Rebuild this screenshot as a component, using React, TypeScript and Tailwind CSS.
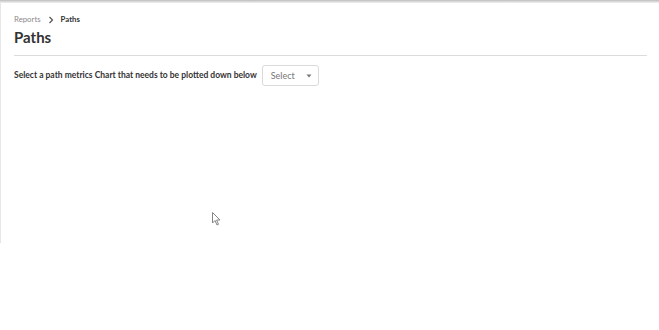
import React from "react";

export default function App() {
  return (
    <div className="w-[659px] h-[330px] bg-white relative overflow-hidden" style={{ fontFamily: 'Lato, "Open Sans", sans-serif' }}>
      <div className="h-[3px] bg-gradient-to-b from-[#bdbdbd] to-[#f3f3f3]" />
      <div className="flex">
        <div className="w-px h-[240px] bg-[#e6e6e6]" />
        <div className="flex-1 pl-[13px] pr-[12px]">
          <div className="flex items-center gap-[5px] mt-[12px] h-[10px] text-[7.8px]">
            <span className="text-[#8a8a8a]">Reports</span>
            <svg width="8" height="8" viewBox="0 0 8 8" className="mx-[1px]">
              <path d="M2.5 1 L5.5 4 L2.5 7" stroke="#555" strokeWidth="1.2" fill="none" />
            </svg>
            <span className="text-[#333] font-bold">Paths</span>
          </div>
          <div className="mt-[2px] text-[15px] font-bold text-[#333] leading-[20px]">Paths</div>
          <div className="mt-[8px] h-px bg-[#dcdcdc]" />
          <div className="flex items-center mt-[9px] gap-[5px]">
            <span className="text-[8.5px] font-bold text-[#333]">Select a path metrics Chart that needs to be plotted down below</span>
            <div className="w-[57px] h-[21px] border border-[#dadada] rounded-[3px] flex items-center justify-between pl-[8px] pr-[6px]">
              <span className="text-[9px] text-[#777]">Select</span>
              <svg width="6" height="4" viewBox="0 0 6 4"><path d="M0.5 0.5 L5.5 0.5 L3 3.5 Z" fill="#777" /></svg>
            </div>
          </div>
        </div>
      </div>
      <svg className="absolute left-[212px] top-[212px]" width="10" height="14" viewBox="0 0 10 14">
        <path d="M0.5 0.5 L0.5 11 L3 8.5 L5 13 L6.5 12.3 L4.6 8 L8 8 Z" fill="#fff" stroke="#777" strokeWidth="0.9" />
      </svg>
    </div>
  );
}
